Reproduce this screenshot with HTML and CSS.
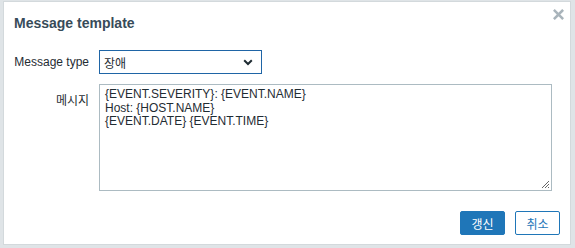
FILE: index.html
```html
<!DOCTYPE html>
<html>
<head>
<meta charset="utf-8">
<link rel="stylesheet" href="styles.css">
</head>
<body>
<div class="dialog">
  <div class="header">
    <h4 class="title">Message template</h4>
    <button class="close" aria-label="Close">
      <svg width="11" height="11" viewBox="0 0 11 11"><path d="M1.8 1.8 L9.2 9.2 M9.2 1.8 L1.8 9.2" stroke="#a9b4bb" stroke-width="2.6" stroke-linecap="square"/></svg>
    </button>
  </div>
  <div class="body">
    <div class="row">
      <label class="label">Message type</label>
      <div class="select">
        <span class="select-text">장애</span>
        <svg class="chev" width="10" height="7" viewBox="0 0 10 7"><path d="M1.2 1.3 L5 5 L8.8 1.3" fill="none" stroke="#1f2c33" stroke-width="2"/></svg>
      </div>
    </div>
    <div class="row row-msg">
      <label class="label">메시지</label>
      <div class="textarea">{EVENT.SEVERITY}: {EVENT.NAME}
Host: {HOST.NAME}
{EVENT.DATE} {EVENT.TIME}<svg class="grip" width="9" height="9" viewBox="0 0 9 9"><path d="M8 1 L1 8 M8 4 L4 8 M8 7 L7 8" stroke="#666" stroke-width="1"/></svg></div>
    </div>
  </div>
  <div class="footer">
    <button class="btn btn-primary">갱신</button>
    <button class="btn btn-alt">취소</button>
  </div>
</div>
</body>
</html>
```
FILE: styles.css
```css
html, body {
  margin: 0;
  padding: 0;
}
body {
  background: #dfe4e7;
  font-family: Arial, "Liberation Sans", "Noto Sans CJK KR", sans-serif;
  font-size: 12px;
  color: #1f2c33;
  width: 575px;
  height: 248px;
  overflow: hidden;
}
.dialog {
  box-sizing: border-box;
  margin: 1px 0 0 3px;
  width: 568px;
  height: 244px;
  background: #fff;
  border: 1px solid #d3d9dc;
  display: flex;
  flex-direction: column;
}
.header {
  display: flex;
  align-items: flex-start;
  justify-content: space-between;
  padding: 13px 6px 0 10px;
  height: 40px;
  box-sizing: border-box;
}
.title {
  margin: 0;
  font-size: 14px;
  font-weight: bold;
  color: #374b59;
  line-height: 16px;
}
.close {
  border: 0;
  background: none;
  padding: 0;
  margin: -6px 0 0 0;
  width: 11px;
  height: 11px;
  display: flex;
}
.body {
  padding: 8px 0 0 10px;
  display: flex;
  flex-direction: column;
  gap: 10px;
}
.row {
  display: flex;
  align-items: center;
  gap: 10px;
}
.row-msg {
  align-items: flex-start;
}
.label {
  width: 75px;
  text-align: right;
  line-height: 24px;
  color: #1f2c33;
}
.row-msg .label {
  line-height: 14px;
  padding-top: 10px;
}
.select {
  box-sizing: border-box;
  width: 163px;
  height: 24px;
  border: 1px solid #1f65a6;
  display: flex;
  align-items: center;
  justify-content: space-between;
  padding: 0 8px 0 4px;
}
.chev {
  display: block;
}
.textarea {
  box-sizing: border-box;
  width: 453px;
  height: 107px;
  border: 1px solid #acbbc2;
  padding: 3px 5px;
  white-space: pre-wrap;
  line-height: 13.5px;
  position: relative;
}
.grip {
  position: absolute;
  right: 1px;
  bottom: 1px;
}
.footer {
  margin-top: auto;
  display: flex;
  justify-content: flex-end;
  gap: 10px;
  padding: 0 10px 9px 0;
}
.btn {
  box-sizing: border-box;
  height: 24px;
  width: 45px;
  font-family: Arial, "Liberation Sans", "Noto Sans CJK KR", sans-serif;
  font-size: 12px;
  border-radius: 2px;
  padding: 0;
}
.btn-primary {
  background: #1f76b8;
  border: 1px solid #1f76b8;
  color: #fff;
}
.btn-alt {
  background: #fff;
  border: 1px solid #1f76b8;
  color: #1f76b8;
}
```
